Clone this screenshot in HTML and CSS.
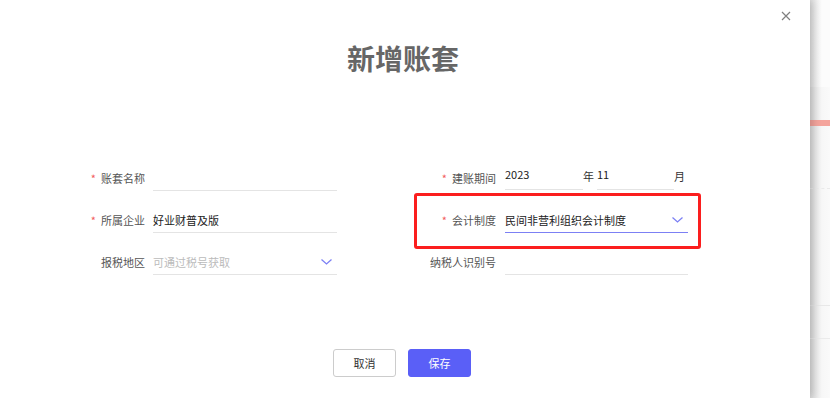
FILE: index.html
```html
<!DOCTYPE html>
<html lang="zh-CN">
<head>
    <meta charset="UTF-8">
    <meta name="viewport" content="width=device-width, initial-scale=1.0">
    <title>新增账套</title>
    <link rel="stylesheet" href="styles.css">
</head>
<body>
    <div class="page">
        <div class="modal">
            <span class="close">
                <svg width="10" height="10" viewBox="0 0 10 10"><path d="M1 1 L9 9 M9 1 L1 9" stroke="#808080" stroke-width="1.2" fill="none"/></svg>
            </span>
            <h1 class="title">新增账套</h1>

            <div class="form">
                <!-- left column -->
                <div class="col col-left">
                    <div class="row">
                        <label class="label"><span class="req">*</span>账套名称</label>
                        <div class="field"></div>
                    </div>
                    <div class="row">
                        <label class="label"><span class="req">*</span>所属企业</label>
                        <div class="field">好业财普及版</div>
                    </div>
                    <div class="row">
                        <label class="label">报税地区</label>
                        <div class="field placeholder">
                            可通过税号获取
                            <svg class="arrow" width="11" height="6" viewBox="0 0 11 6"><path d="M0.5 0.5 L5.5 5 L10.5 0.5" stroke="#7c80f4" stroke-width="1.3" fill="none"/></svg>
                        </div>
                    </div>
                </div>

                <!-- right column -->
                <div class="col col-right">
                    <div class="row">
                        <label class="label"><span class="req">*</span>建账期间</label>
                        <div class="period">
                            <div class="field field-year">2023</div>
                            <span class="unit">年</span>
                            <div class="field field-month">11</div>
                            <span class="unit">月</span>
                        </div>
                    </div>
                    <div class="row marked">
                        <label class="label"><span class="req">*</span>会计制度</label>
                        <div class="field active">
                            民间非营利组织会计制度
                            <svg class="arrow" width="11" height="6" viewBox="0 0 11 6"><path d="M0.5 0.5 L5.5 5 L10.5 0.5" stroke="#7c80f4" stroke-width="1.3" fill="none"/></svg>
                        </div>
                    </div>
                    <div class="row">
                        <label class="label">纳税人识别号</label>
                        <div class="field"></div>
                    </div>
                </div>
            </div>

            <div class="actions">
                <button class="btn btn-cancel">取消</button>
                <button class="btn btn-save">保存</button>
            </div>
        </div>

        <div class="backdrop">
            <div class="bd-top"></div>
            <div class="bd-red"></div>
            <div class="bd-mid"></div>
            <div class="bd-low"></div>
            <div class="bd-foot"></div>
        </div>
    </div>
</body>
</html>
```

FILE: styles.css
```css
body {
    margin: 0;
    font-family: "Noto Sans CJK SC", "Noto Sans", sans-serif;
    background-color: #f5f5f5;
}

.page {
    display: flex;
    height: 398px;
    overflow: hidden;
}

.modal {
    width: 810px;
    flex-shrink: 0;
    background-color: #fff;
    position: relative;
    box-shadow: 3px 0 8px rgba(0, 0, 0, 0.18);
    z-index: 1;
}

.close {
    position: absolute;
    left: 781px;
    top: 11px;
    width: 10px;
    height: 10px;
    display: flex;
}

.title {
    margin: 0;
    padding-top: 39px;
    padding-right: 4px;
    text-align: center;
    font-size: 28px;
    line-height: 38px;
    font-weight: 700;
    color: #666;
}

.form {
    display: flex;
    margin-top: 88px;
}

.col {
    display: flex;
    flex-direction: column;
    gap: 16px;
}

.col-left {
    width: 337px;
}

.col-right {
    width: 351px;
}

.row {
    display: flex;
    align-items: center;
    height: 26px;
}

.label {
    font-size: 11px;
    color: #555;
    text-align: right;
    flex-shrink: 0;
}

.col-left .label {
    width: 145px;
    margin-right: 8px;
}

.col-right .label {
    width: 159px;
    margin-right: 9px;
}

.req {
    color: #f25c5c;
    margin-right: 5px;
}

.field {
    flex: 1;
    height: 25px;
    border-bottom: 1px solid #e4e4e4;
    display: flex;
    align-items: center;
    justify-content: space-between;
    font-size: 11px;
    color: #222;
}

.placeholder {
    color: #bbb;
}

.active {
    border-bottom-color: #7c80f4;
}

.arrow {
    margin-right: 5px;
}

.period {
    flex: 1;
    display: flex;
    align-items: flex-start;
    height: 24px;
}

.period .field {
    height: 23px;
    align-items: flex-start;
    line-height: 16px;
}

.field-year {
    flex: 0 0 78px;
}

.field-month {
    flex: 0 0 77px;
}

.unit {
    font-size: 11px;
    line-height: 16px;
    color: #333;
    width: 14px;
    padding-top: 2px;
}

.marked {
    position: relative;
}

.marked::after {
    content: "";
    position: absolute;
    left: 77px;
    top: -14px;
    width: 281px;
    height: 50px;
    border: 3px solid #fb1e1e;
    border-radius: 3px;
}

.actions {
    display: flex;
    justify-content: center;
    gap: 12px;
    margin-top: 74px;
    padding-right: 6px;
}

.btn {
    width: 63px;
    height: 28px;
    border-radius: 3px;
    font-family: inherit;
    font-size: 11px;
    cursor: pointer;
}

.btn-cancel {
    background-color: #fff;
    border: 1px solid #ccc;
    color: #333;
}

.btn-save {
    background-color: #5a5ff7;
    border: 1px solid #5a5ff7;
    color: #fff;
}

.backdrop {
    flex: 1;
    display: flex;
    flex-direction: column;
    background: linear-gradient(to right, #dcdcdc, #f7f7f7 60%, #fafafa);
}

.bd-top {
    height: 87px;
    background: linear-gradient(to right, #e2e2e2, #fcfcfc 60%);
}

.bd-red {
    height: 6px;
    margin-top: 33px;
    background-color: #f4a49c;
}

.bd-mid {
    height: 62px;
    border-bottom: 1px dashed #eaeaea;
}

.bd-low {
    height: 116px;
    border-bottom: 1px solid #e8e8e8;
}

.bd-foot {
    height: 32px;
    border-bottom: 1px solid #ebebeb;
}
```
